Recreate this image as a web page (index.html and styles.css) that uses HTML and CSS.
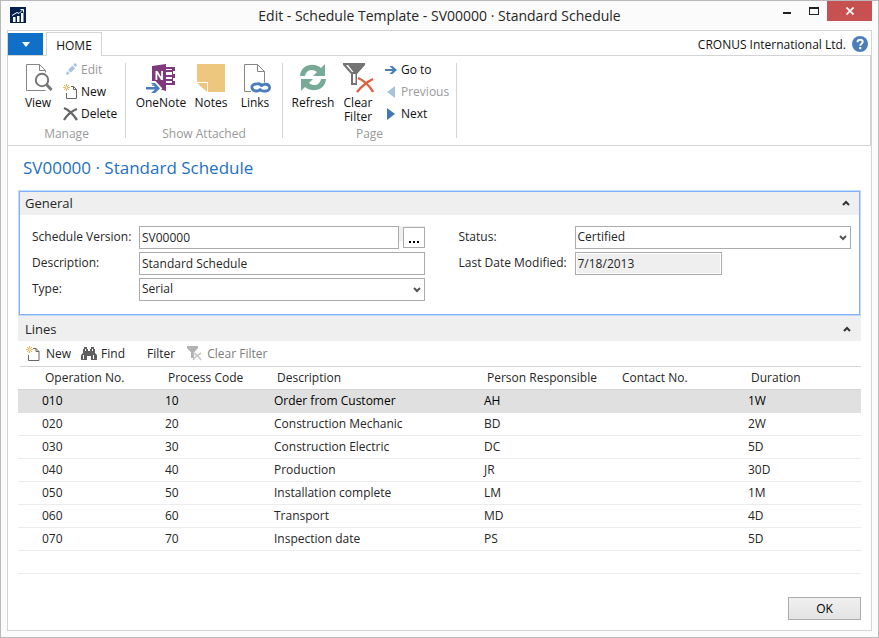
FILE: index.html
```html
<!DOCTYPE html>
<html lang="en">
<head>
<meta charset="utf-8">
<title>Edit - Schedule Template</title>
<link rel="stylesheet" href="styles.css">
</head>
<body>
<div class="window">
  <header class="titlebar">
    <svg class="app-icon" width="16" height="16" viewBox="0 0 16 16" aria-hidden="true">
      <rect width="16" height="16" fill="#04204f"/>
      <path d="M3 10h2.500v5H3zM7 9h2.500v6H7zM11 6h2.500v9H11z" fill="#fff"/>
      <path d="M2 8.500l5-3 2 1 4-4M10.500 2.500h3v3" fill="none" stroke="#fff" stroke-width="1"/>
    </svg>
    <h1 class="window-title">Edit - Schedule Template - SV00000 · Standard Schedule</h1>
    <div class="window-controls">
      <button class="wc" aria-label="Minimize"><svg width="10" height="8" viewBox="0 0 10 8"><path d="M1 5h8v2H1z" fill="#222"/></svg></button>
      <button class="wc" aria-label="Maximize"><svg width="10" height="8" viewBox="0 0 10 8"><path d="M0 0h10v8H0zM1 2v5h8V2z" fill="#222" fill-rule="evenodd"/></svg></button>
      <button class="wc close" aria-label="Close"><svg width="8" height="8" viewBox="0 0 8 8"><path d="M.5.500l7 7M7.500.500l-7 7" stroke="#fff" stroke-width="1.700"/></svg></button>
    </div>
  </header>

  <main class="client">
    <nav class="tabs">
      <button class="file-tab" aria-label="Application menu"><svg width="8" height="5" viewBox="0 0 8 5"><path d="M0 0h8L4 5z" fill="#fff"/></svg></button>
      <button class="home-tab">HOME</button>
      <span class="company">CRONUS International Ltd.</span>
      <button class="help" aria-label="Help"><svg width="16" height="16" viewBox="0 0 16 16"><circle cx="8" cy="8" r="8" fill="#4a7ebb"/><path d="M5.500 6.200C5.500 2.800 10.700 2.900 10.700 5.800 10.700 7.700 8.200 7.700 8.200 9.800" fill="none" stroke="#fff" stroke-width="2"/><path d="M7.100 11h2.200v2.200H7.100z" fill="#fff"/></svg></button>
    </nav>

    <div class="ribbon">
      <section class="group manage">
        <div class="group-body">
          <button class="big view">
            <svg width="30" height="30" viewBox="-2 0 30 30"><g fill="none" stroke="#858585"><path d="M20.500 27.500H1.500V1.500h13l6 6v2M14.500 1.500v6h6"/><circle cx="17" cy="17" r="6.200" fill="#fff" stroke-width="2" stroke="#777"/><path d="M21.500 21.500l5 5.500" stroke-width="3" stroke="#777"/></g></svg>
            <span>View</span>
          </button>
          <div class="small-list">
            <button class="small" disabled><svg width="16" height="16" viewBox="0 0 16 16"><path d="M3 13l1-4 2.800 2.800zM5 8l4.500-4.500 2.700 2.700L7.700 10.700zM10.200 2.800l1.300-1.300c1-.7 2.800 1 2.200 2.200l-1.200 1.400z" fill="#a9c3df"/></svg>Edit</button>
            <button class="small"><svg width="16" height="16" viewBox="0 0 16 16"><path d="M8 2.500h2.500l3 3v9h-10V9M10.500 2.500v3h3" fill="none" stroke="#666"/><path d="M3.500 0v7M0 3.500h7M1 1l5 5M6 1L1 6" stroke="#e9b45c" fill="none"/><circle cx="3.500" cy="3.500" r="1" fill="#fff"/></svg>New</button>
            <button class="small"><svg width="16" height="16" viewBox="0 0 16 16"><path d="M1 2c5 2 9 6 13 12M14 3C9 5 4 9 1 14" fill="none" stroke="#666" stroke-width="2.300"/></svg>Delete</button>
          </div>
        </div>
        <div class="group-label">Manage</div>
      </section>

      <section class="group attached">
        <div class="group-body">
          <button class="big onenote">
            <svg width="32" height="30" viewBox="0 0 32 30"><path d="M7 3l14-2v27L7 24z" fill="#80397b"/><path d="M10.500 17V8h2l3.700 6V8H18v9h-2l-3.700-6v6z" fill="#fff"/><path d="M21 4h9v4h-2v3h2v4h-2v3h2v4h-9v-2h6v-2h-6v-2h6v-2h-6v-2h6V9h-6V7h6V6h-6z" fill="#80397b"/><path d="M0 24h10l-4-5h4l6 6.500-6 5H6l4-4H0z" fill="#fff" stroke="#fff" stroke-width="2"/><path d="M1 24h9l-4-4h4l5 5.500-5 4.500H6l4-3.500H1z" fill="#4a7ebb"/></svg>
            <span>OneNote</span>
          </button>
          <button class="big notes">
            <svg width="28" height="30" viewBox="0 0 28 30"><path d="M0 1h28v28H11V19H0z" fill="#eec77f"/><path d="M0 20h10v9z" fill="#eec77f"/></svg>
            <span>Notes</span>
          </button>
          <button class="big links">
            <svg width="32" height="30" viewBox="-4 0 32 30"><path d="M8 28.500H1.500V1.500h13l7 7v11M14.500 1.500v7h7" fill="none" stroke="#858585"/><g fill="none" stroke="#4a7ebb" stroke-width="2.800"><path d="M19 23.500c-1-3-4-3-6-2.500-3 0-4.500 2-4 4 .5 2.500 3 3.300 6 2.800 1.500-.3 2.300-.8 3-2"/><path d="M17 26c1 2.500 4 2.300 6 2 3-.4 3.800-2.400 3.500-4-.5-2.500-3-3-5.500-2.600-1.500.2-2.300.8-3 2"/></g></svg>
            <span>Links</span>
          </button>
        </div>
        <div class="group-label">Show Attached</div>
      </section>

      <section class="group page">
        <div class="group-body">
          <button class="big refresh">
            <svg width="28" height="30" viewBox="0 0 28 30"><g fill="#78aa98"><path d="M1 13C2 1 15-1 22 5l4-4v12H14l4-4C13 5 7 7 6 13z"/><path d="M27 16C26 28 13 30 6 24l-4 4V16h12l-4 4c5 4 11 2 12-4z"/></g></svg>
            <span>Refresh</span>
          </button>
          <button class="big clear">
            <svg width="32" height="30" viewBox="0 0 32 30"><path d="M1 0h22v2l-8 9v11H9V11L1 2z" fill="#737373"/><path d="M11 11h2.500v9H11zM4 2h2l5.500 7H10z" fill="#fff"/><path d="M16 15c5 2 11 7 15 14M31 16c-6 3-12 8-16 13" fill="none" stroke="#da603e" stroke-width="2.400"/></svg>
            <span>Clear<br>Filter</span>
          </button>
          <div class="small-list">
            <button class="small"><svg width="12" height="16" viewBox="0 0 12 16"><path d="M0 7h7.500L4.500 4h3L12 8l-4.500 4h-3l3-3H0z" fill="#4a7ebb"/></svg>Go to</button>
            <button class="small" disabled><svg width="12" height="16" viewBox="0 0 12 16"><path d="M10 2v12L2 8z" fill="#a9c3df"/></svg>Previous</button>
            <button class="small"><svg width="12" height="16" viewBox="0 0 12 16"><path d="M2 2v12l8-6z" fill="#4178b9"/></svg>Next</button>
          </div>
        </div>
        <div class="group-label">Page</div>
      </section>
    </div>

    <div class="content">
      <h2 class="page-title">SV00000 · Standard Schedule</h2>

      <section class="general">
        <div class="fasttab"><h3>General</h3><button class="collapse" aria-label="Collapse General"><svg width="8" height="6" viewBox="0 0 8 6"><path d="M1 5l3-3 3 3" fill="none" stroke="#333" stroke-width="2"/></svg></button></div>
        <form class="fields">
          <div class="column left">
            <label for="version">Schedule Version:</label>
            <div class="lookup"><input id="version" value="SV00000"><button type="button" class="assist" aria-label="Look up schedule version"><svg width="12" height="2" viewBox="0 0 12 2"><path d="M1 0h2v2H1zM5 0h2v2H5zM9 0h2v2H9z"/></svg></button></div>
            <label for="description">Description:</label>
            <input id="description" value="Standard Schedule">
            <label for="type">Type:</label>
            <div class="select"><select id="type"><option>Serial</option></select><svg width="8" height="6" viewBox="0 0 8 6"><path d="M1 1l3 3 3-3" fill="none" stroke="#555" stroke-width="2"/></svg></div>
          </div>
          <div class="column right">
            <label for="status">Status:</label>
            <div class="select"><select id="status"><option>Certified</option></select><svg width="8" height="6" viewBox="0 0 8 6"><path d="M1 1l3 3 3-3" fill="none" stroke="#555" stroke-width="2"/></svg></div>
            <label for="modified">Last Date Modified:</label>
            <input id="modified" class="date" value="7/18/2013" readonly>
          </div>
        </form>
      </section>

      <section class="lines">
        <div class="fasttab"><h3>Lines</h3><button class="collapse" aria-label="Collapse Lines"><svg width="8" height="6" viewBox="0 0 8 6"><path d="M1 5l3-3 3 3" fill="none" stroke="#333" stroke-width="2"/></svg></button></div>
        <div class="toolbar">
          <button class="tool new"><svg width="16" height="16" viewBox="0 0 16 16"><path d="M7 2.500h3l3 3v9H2.500V9M10 2.500v3h3" fill="none" stroke="#666"/><path d="M3.500 0v7M0 3.500h7M1 1l5 5M6 1L1 6" stroke="#e9b45c" fill="none"/><circle cx="3.500" cy="3.500" r="1" fill="#fff"/></svg>New</button>
          <button class="tool find"><svg width="16" height="16" viewBox="0 0 16 16"><path d="M3 1h3v2h1v2h2V3h1V1h3v2h1v4l2 2v5h-6v-4H6v4H0V9l2-2V3h1z" fill="#5f5f5f"/><path d="M2 9h1v4H2zM12 9h1v4h-1zM4 3h1v2H4zM11 3h1v2h-1z" fill="#fff"/></svg>Find</button>
          <button class="tool filter">Filter</button>
          <button class="tool clear-filter" disabled><svg width="16" height="16" viewBox="0 0 16 16"><path d="M0 0h11v2L7 6.500V12H4V6.500L0 2z" fill="#b2b2b2"/><path d="M6 7c4 1 6 4 8 7M14 7c-4 2-6 4-8 7" fill="none" stroke="#c4c4c4" stroke-width="1.500"/></svg>Clear Filter</button>
        </div>
        <table>
          <colgroup><col class="c-op"><col class="c-code"><col class="c-desc"><col class="c-person"><col class="c-contact"><col></colgroup>
          <thead><tr><th>Operation No.</th><th>Process Code</th><th>Description</th><th>Person Responsible</th><th>Contact No.</th><th>Duration</th></tr></thead>
          <tbody>
            <tr class="selected"><td>010</td><td>10</td><td>Order from Customer</td><td>AH</td><td></td><td>1W</td></tr>
            <tr><td>020</td><td>20</td><td>Construction Mechanic</td><td>BD</td><td></td><td>2W</td></tr>
            <tr><td>030</td><td>30</td><td>Construction Electric</td><td>DC</td><td></td><td>5D</td></tr>
            <tr><td>040</td><td>40</td><td>Production</td><td>JR</td><td></td><td>30D</td></tr>
            <tr><td>050</td><td>50</td><td>Installation complete</td><td>LM</td><td></td><td>1M</td></tr>
            <tr><td>060</td><td>60</td><td>Transport</td><td>MD</td><td></td><td>4D</td></tr>
            <tr><td>070</td><td>70</td><td>Inspection date</td><td>PS</td><td></td><td>5D</td></tr>
            <tr><td></td><td></td><td></td><td></td><td></td><td></td></tr>
          </tbody>
        </table>
      </section>

      <footer class="actions"><button class="ok">OK</button></footer>
    </div>
  </main>
</div>
</body>
</html>
```
FILE: styles.css
```css
* { box-sizing: border-box; }

body {
  margin: 0;
  font: 12px/16px "Open Sans", "Noto Sans", sans-serif;
  color: #262626;
}

button, input, select { font: inherit; color: inherit; }
button { border: 0; padding: 0; background: none; }
h1, h2, h3 { margin: 0; font-weight: 400; }
svg { display: block; flex: none; }

.window {
  display: flex;
  flex-direction: column;
  min-height: 100vh;
  padding: 0 6px 6px;
  border: 1px solid #b9b9b9;
  background: #fbfbfb;
}

/* Title bar */
.titlebar {
  display: grid;
  grid-template-columns: 133px 1fr 133px;
  height: 29px;
}
.app-icon { margin: 6px 0 0 3px; }
.window-title {
  font-size: 14px;
  line-height: 29px;
  text-align: center;
  white-space: nowrap;
}
.window-controls { display: flex; justify-content: flex-end; height: 20px; }
.wc { display: flex; align-items: center; justify-content: center; width: 27px; }
.wc.close { width: 45px; background: #c75050; }

/* Client area */
.client {
  flex: 1;
  display: flex;
  flex-direction: column;
  border: 1px solid #d4d4d4;
  background: #fff;
}
.tabs { display: flex; align-items: center; height: 25px; padding: 1px 3px 0 0; }
.file-tab {
  display: flex;
  align-items: center;
  justify-content: center;
  width: 35px;
  height: 23px;
  background: #1070c8;
}
.home-tab {
  align-self: stretch;
  width: 56px;
  margin-left: 3px;
  padding-top: 2px;
  border: 1px solid #d4d4d4;
  border-bottom: 0;
  background: #fff;
  color: #111;
  z-index: 1;
}
.company { margin-left: auto; margin-right: 6px; padding-top: 2px; color: #111; }

/* Ribbon */
.ribbon {
  display: flex;
  height: 91px;
  margin-top: -1px;
  padding: 7px 0;
  border: 1px solid #d4d4d4;
  border-left: 0;
}
.group {
  display: flex;
  flex-direction: column;
  justify-content: space-between;
  border-right: 1px solid #d4d4d4;
}
.manage { width: 118px; }
.attached { width: 157px; }
.page { width: 174px; }
.group-body { display: flex; height: 62px; }
.group-label { line-height: 8px; text-align: center; color: #999; }
.big {
  display: flex;
  flex-direction: column;
  align-items: center;
  flex: none;
  line-height: 14px;
  color: #111;
}
.big svg { margin-bottom: 3px; }
.view { width: 36px; margin-left: 12px; }
.onenote { width: 54px; margin-left: 8px; }
.notes { width: 46px; }
.links { width: 42px; }
.refresh { width: 44px; margin-left: 8px; }
.clear { width: 42px; margin-left: 2px; }
.small-list { display: flex; flex-direction: column; margin-left: 7px; margin-top: -4px; }
.small { display: flex; align-items: center; gap: 2px; height: 22px; color: #111; }
.small:disabled { color: #999; }
.page .small-list { margin-left: 6px; }
.page .small { gap: 4px; }

/* Page content */
.content { flex: 1; display: flex; flex-direction: column; padding: 9px 10px 10px; }
.page-title {
  margin-left: 5px;
  font-size: 17px;
  line-height: 26px;
  color: #1e70c1;
}
.general {
  margin: 10px 1px 1px;
  border: 1px solid #7fb0fb;
  box-shadow: 0 0 0 1px #c3dafb;
}
.fasttab {
  display: flex;
  align-items: center;
  justify-content: space-between;
  height: 23px;
  padding: 0 9px 1px 5px;
  background: #efefef;
}
.fasttab h3 { font-size: 13px; line-height: 20px; }

.fields { display: flex; gap: 34px; padding: 11px 8px 13px 12px; }
.column {
  flex: 1;
  display: grid;
  grid-auto-rows: 23px;
  gap: 3px 0;
  align-items: center;
}
.left { grid-template-columns: 107px 1fr; }
.right { grid-template-columns: 116px 1fr; }
.column label { padding-bottom: 1px; }
.column input, .column select {
  width: 100%;
  height: 23px;
  min-width: 0;
  margin: 0;
  padding: 0 2px 1px;
  border: 1px solid #ababab;
  border-radius: 0;
  background: #fff;
  outline: 0;
}
.column input.date {
  width: 147px;
  background: #efefef;
  box-shadow: inset 0 0 0 1px #fff;
}
.select { position: relative; }
.column select { display: block; appearance: none; }
.select svg { position: absolute; right: 4px; top: 9px; pointer-events: none; }
.lookup {
  display: flex;
  align-items: center;
  gap: 4px;
  background: linear-gradient(#efefef 15px, #fff 15px);
}
.assist {
  flex: none;
  display: flex;
  justify-content: center;
  align-items: flex-end;
  width: 22px;
  height: 21px;
  padding-bottom: 4px;
  border: 1px solid #ababab;
  background: #fff;
}

/* Lines */
.lines .fasttab { height: 25px; padding: 0 10px 0 7px; }
.toolbar {
  display: flex;
  align-items: center;
  height: 26px;
  margin-left: 2px;
  padding-left: 6px;
  border-bottom: 1px solid #d4d4d4;
}
.tool { display: flex; align-items: center; gap: 4px; }
.tool:disabled { color: #7d7d7d; }
.find { margin-left: 10px; }
.filter { margin-left: 22px; }
.clear-filter { margin-left: 12px; }

table { width: 100%; table-layout: fixed; border-collapse: collapse; }
.c-op { width: 144px; }
.c-code { width: 109px; }
.c-desc { width: 210px; }
.c-person { width: 135px; }
.c-contact { width: 129px; }
th, td {
  height: 23px;
  padding: 0 0 0 3px;
  border-bottom: 1px solid #ececec;
  text-align: left;
  font-weight: 400;
  white-space: nowrap;
}
th { height: 22px; padding-left: 6px; border-color: #d4d4d4; }
th:first-child { padding-left: 27px; }
td:first-child { padding-left: 24px; }
.selected { background: #e0e0e0; color: #000; }
.selected td { border-bottom-color: #e0e0e0; }

.actions { display: flex; justify-content: flex-end; margin-top: auto; }
.ok {
  width: 73px;
  height: 23px;
  border: 1px solid #ababab;
  background: linear-gradient(#f0f0f0, #e3e3e3);
  color: #000;
}
```
